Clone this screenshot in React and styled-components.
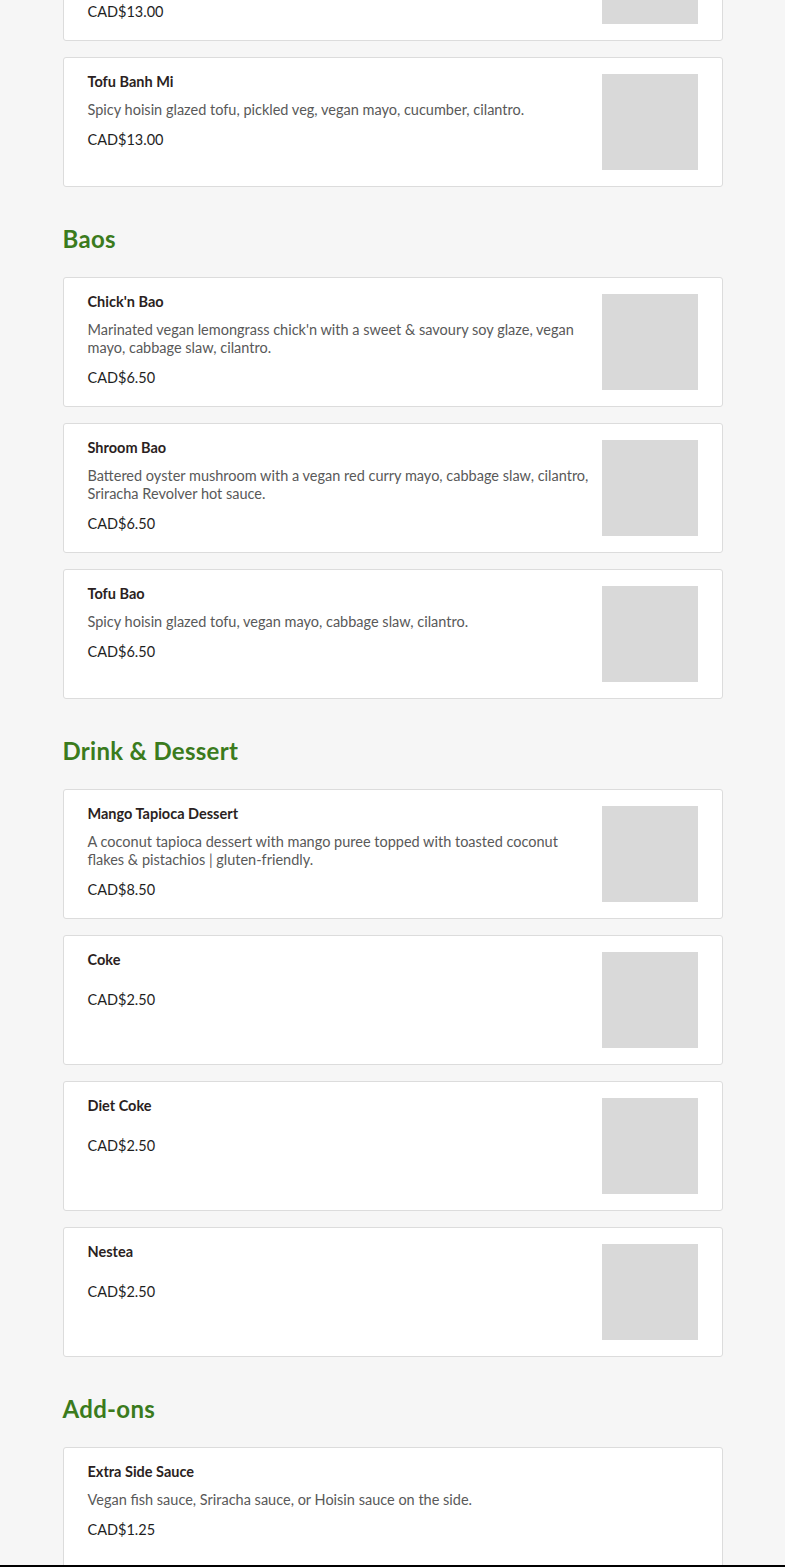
import React from 'react'
import styled, { createGlobalStyle } from 'styled-components'

const GlobalStyle = createGlobalStyle`
  html, body {
    margin: 0;
    padding: 0;
    background: #f6f6f6;
  }
  body {
    font-family: Lato, "Open Sans", Arial, sans-serif;
    -webkit-font-smoothing: antialiased;
  }
`

const colors = {
  green: '#3b7b1d',
  border: '#dcdcdc',
  title: '#2b1f22',
  text: '#595959',
  price: '#1f1f1f',
  thumb: '#d9d9d9',
}

// page is photographed scrolled part way down the menu
const Menu = styled.main`
  max-width: 660px;
  margin: -89px auto 0;
  padding-bottom: 200px;
`

const Section = styled.section`
  margin-top: 37px;
  &:first-child {
    margin-top: 0;
  }
`

const Heading = styled.h2`
  margin: 0 0 23px;
  font-size: 24px;
  line-height: 30px;
  font-weight: 700;
  color: ${colors.green};
  letter-spacing: 0.3px;
`

const List = styled.div`
  display: flex;
  flex-direction: column;
  gap: 16px;
`

const Card = styled.article`
  display: flex;
  gap: 10px;
  min-height: 130px;
  box-sizing: border-box;
  padding: 15px 24px 16px;
  background: #fff;
  border: 1px solid ${colors.border};
  border-radius: 3px;
`

const Info = styled.div`
  flex: 1;
  display: flex;
  flex-direction: column;
`

const Name = styled.h3`
  margin: 0;
  font-size: 14.5px;
  line-height: 18px;
  font-weight: 700;
  color: ${colors.title};
`

const Desc = styled.p`
  margin: 10px 0 12px;
  font-size: 14.5px;
  line-height: 18px;
  color: ${colors.text};
`

const Price = styled.div`
  font-size: 14.5px;
  line-height: 18px;
  color: ${colors.price};
`

const Thumb = styled.div`
  flex: none;
  width: 96px;
  height: 96px;
  margin-top: 1px;
  background: ${colors.thumb};
`

const BottomEdge = styled.div`
  position: fixed;
  left: 0;
  right: 0;
  bottom: 0;
  height: 2px;
  background: #000;
`

const menu = [
  {
    items: [
      {
        name: "Chick'n Banh Mi",
        desc: "Marinated vegan lemongrass chick'n, pickled veg, vegan mayo, cucumber, cilantro, on a toasted baguette.",
        price: '13.00',
      },
      {
        name: 'Tofu Banh Mi',
        desc: 'Spicy hoisin glazed tofu, pickled veg, vegan mayo, cucumber, cilantro.',
        price: '13.00',
      },
    ],
  },
  {
    title: 'Baos',
    items: [
      {
        name: "Chick'n Bao",
        desc: "Marinated vegan lemongrass chick'n with a sweet & savoury soy glaze, vegan mayo, cabbage slaw, cilantro.",
        price: '6.50',
      },
      {
        name: 'Shroom Bao',
        desc: 'Battered oyster mushroom with a vegan red curry mayo, cabbage slaw, cilantro, Sriracha Revolver hot sauce.',
        price: '6.50',
      },
      {
        name: 'Tofu Bao',
        desc: 'Spicy hoisin glazed tofu, vegan mayo, cabbage slaw, cilantro.',
        price: '6.50',
      },
    ],
  },
  {
    title: 'Drink & Dessert',
    items: [
      {
        name: 'Mango Tapioca Dessert',
        desc: 'A coconut tapioca dessert with mango puree topped with toasted coconut flakes & pistachios | gluten-friendly.',
        price: '8.50',
      },
      { name: 'Coke', desc: '', price: '2.50' },
      { name: 'Diet Coke', desc: '', price: '2.50' },
      { name: 'Nestea', desc: '', price: '2.50' },
    ],
  },
  {
    title: 'Add-ons',
    items: [
      {
        name: 'Extra Side Sauce',
        desc: 'Vegan fish sauce, Sriracha sauce, or Hoisin sauce on the side.',
        price: '1.25',
        noImage: true,
      },
    ],
  },
]

function MenuItem ({ item }) {
  return (
    <Card>
      <Info>
        <Name>{item.name}</Name>
        <Desc>{item.desc}</Desc>
        <Price>CAD${item.price}</Price>
      </Info>
      {!item.noImage && <Thumb />}
    </Card>
  )
}

export default function App () {
  return (
    <>
      <GlobalStyle />
      <Menu>
        {menu.map((section, i) => (
          <Section key={i}>
            {section.title && <Heading>{section.title}</Heading>}
            <List>
              {section.items.map(item => (
                <MenuItem key={item.name} item={item} />
              ))}
            </List>
          </Section>
        ))}
      </Menu>
      <BottomEdge />
    </>
  )
}
